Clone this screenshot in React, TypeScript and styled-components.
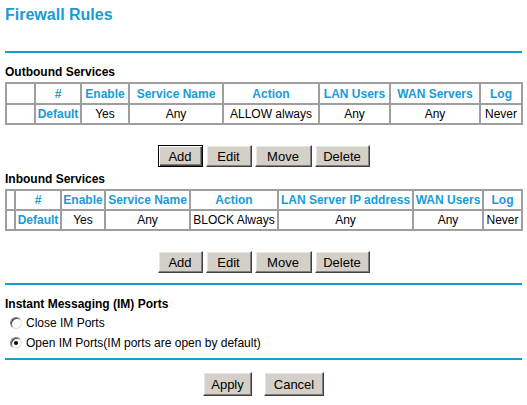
import React, { useState } from "react";
import styled, { createGlobalStyle } from "styled-components";

const GlobalStyle = createGlobalStyle`
  body {
    margin: 0;
    background: #ffffff;
    font-family: "Liberation Sans", Arial, sans-serif;
    font-size: 12px;
    color: #000000;
  }
`;

const BLUE = "#1a9bd4";

const Page = styled.div`
  width: 517px;
  padding: 6px 5px 0 5px;
`;

const Title = styled.h1`
  margin: 0;
  font-size: 16px;
  line-height: 18px;
  font-weight: bold;
  color: ${BLUE};
`;

const Divider = styled.div<{ $top: number }>`
  height: 2px;
  background: ${BLUE};
  margin-top: ${(p) => p.$top}px;
`;

const SectionLabel = styled.div<{ $top: number; $bottom?: number }>`
  margin-top: ${(p) => p.$top}px;
  margin-bottom: ${(p) => p.$bottom ?? 3}px;
  font-weight: bold;
  line-height: 14px;
`;

const RulesTable = styled.table<{ $headH: number }>`
  width: 516px;
  table-layout: fixed;
  border-collapse: collapse;
  border: 2px solid #9e9e9e;

  td,
  th {
    border: 2px solid #9e9e9e;
    padding: 0;
    height: 18px;
    line-height: 14px;
    text-align: center;
    white-space: nowrap;
    overflow: hidden;
  }

  th {
    height: ${(p) => p.$headH}px;
    color: ${BLUE};
    font-weight: bold;
  }
`;

const LinkCell = styled.td`
  color: ${BLUE};
  font-weight: bold;
`;

const ButtonRow = styled.div<{ $top: number; $gap: number }>`
  display: flex;
  justify-content: center;
  gap: ${(p) => p.$gap}px;
  margin-top: ${(p) => p.$top}px;
`;

const Button = styled.button<{ $w: number; $h?: number; $focused?: boolean }>`
  width: ${(p) => p.$w}px;
  height: ${(p) => p.$h ?? 22}px;
  padding: 0;
  font-family: "Liberation Sans", Arial, sans-serif;
  font-size: 13px;
  color: #000000;
  background: #d4d0c8;
  border-style: solid;
  border-width: 1px;
  border-color: ${(p) =>
    p.$focused ? "#000000" : "#ffffff #404040 #404040 #ffffff"};
  box-shadow: ${(p) =>
    p.$focused
      ? "inset 1px 1px #ffffff, inset -1px -1px #404040, inset -2px -2px #808080"
      : "inset -1px -1px #808080, inset 1px 1px #e8e6e0"};
  cursor: pointer;
`;

const RadioRow = styled.label`
  display: flex;
  align-items: center;
  height: 20px;
  padding-left: 5px;
  gap: 4px;
  line-height: 14px;
  cursor: pointer;
`;

const Radio = styled.input`
  appearance: none;
  margin: 0;
  width: 12px;
  height: 12px;
  border-radius: 50%;
  border: 1px solid;
  border-color: #808080 #e0e0e0 #e0e0e0 #808080;
  background: #ffffff;
  box-shadow: inset 1px 1px #404040;
  position: relative;
  flex: none;

  &:checked::after {
    content: "";
    position: absolute;
    left: 3px;
    top: 3px;
    width: 4px;
    height: 4px;
    border-radius: 50%;
    background: #000000;
  }
`;

const outboundCols = [29, 46, 48, 94, 96, 71, 90, 42];
const inboundCols = [9, 46, 44, 85, 88, 135, 70, 39];

const Cols = ({ widths }: { widths: number[] }) => (
  <colgroup>
    {widths.map((w, i) => (
      <col key={i} style={{ width: w }} />
    ))}
  </colgroup>
);

const RuleButtons = ({ top, focused }: { top: number; focused?: boolean }) => (
  <ButtonRow $top={top} $gap={3}>
    <Button $w={45} $focused={focused}>
      Add
    </Button>
    <Button $w={46}>Edit</Button>
    <Button $w={57}>Move</Button>
    <Button $w={55}>Delete</Button>
  </ButtonRow>
);

export default function App() {
  const [imOpen, setImOpen] = useState(true);

  return (
    <Page>
      <GlobalStyle />
      <Title>Firewall Rules</Title>
      <Divider $top={27} />

      <SectionLabel $top={12}>Outbound Services</SectionLabel>
      <RulesTable $headH={19}>
        <Cols widths={outboundCols} />
        <thead>
          <tr>
            <th></th>
            <th>#</th>
            <th>Enable</th>
            <th>Service Name</th>
            <th>Action</th>
            <th>LAN Users</th>
            <th>WAN Servers</th>
            <th>Log</th>
          </tr>
        </thead>
        <tbody>
          <tr>
            <td></td>
            <LinkCell>Default</LinkCell>
            <td>Yes</td>
            <td>Any</td>
            <td>ALLOW always</td>
            <td>Any</td>
            <td>Any</td>
            <td>Never</td>
          </tr>
        </tbody>
      </RulesTable>
      <RuleButtons top={20} focused />

      <SectionLabel $top={5}>Inbound Services</SectionLabel>
      <RulesTable $headH={18}>
        <Cols widths={inboundCols} />
        <thead>
          <tr>
            <th></th>
            <th>#</th>
            <th>Enable</th>
            <th>Service Name</th>
            <th>Action</th>
            <th>LAN Server IP address</th>
            <th>WAN Users</th>
            <th>Log</th>
          </tr>
        </thead>
        <tbody>
          <tr>
            <td></td>
            <LinkCell>Default</LinkCell>
            <td>Yes</td>
            <td>Any</td>
            <td>BLOCK Always</td>
            <td>Any</td>
            <td>Any</td>
            <td>Never</td>
          </tr>
        </tbody>
      </RulesTable>
      <RuleButtons top={20} />

      <Divider $top={10} />
      <SectionLabel $top={12} $bottom={2}>
        Instant Messaging (IM) Ports
      </SectionLabel>
      <div>
        <RadioRow>
          <Radio
            type="radio"
            name="im"
            checked={!imOpen}
            onChange={() => setImOpen(false)}
          />
          Close IM Ports
        </RadioRow>
        <RadioRow>
          <Radio
            type="radio"
            name="im"
            checked={imOpen}
            onChange={() => setImOpen(true)}
          />
          Open IM Ports(IM ports are open by default)
        </RadioRow>
      </div>
      <Divider $top={5} />

      <ButtonRow $top={12} $gap={12}>
        <Button $w={49} $h={24}>
          Apply
        </Button>
        <Button $w={60} $h={24}>
          Cancel
        </Button>
      </ButtonRow>
    </Page>
  );
}
